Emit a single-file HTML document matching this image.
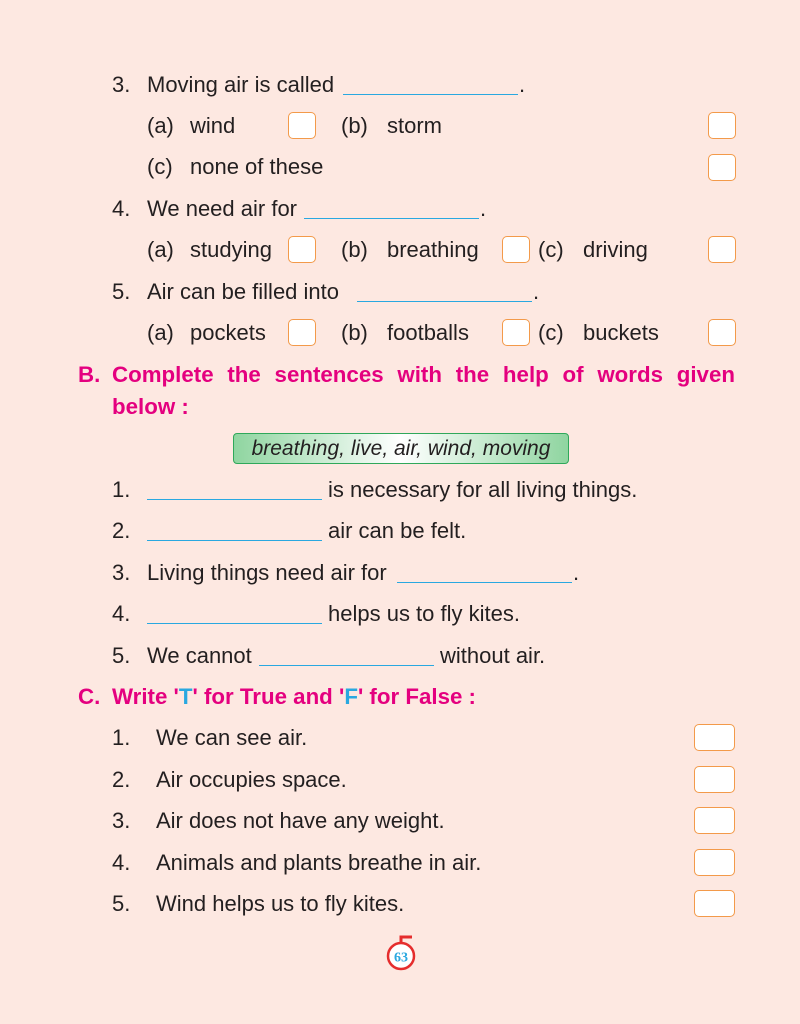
<!DOCTYPE html>
<html><head><meta charset="utf-8"><style>
body{margin:0;width:800px;height:1024px;background:#fde8e1;position:relative;overflow:hidden;font-family:"Liberation Sans",sans-serif;color:#231f20}
.t{position:absolute;font-size:22px;line-height:24px;white-space:nowrap;margin-top:1px}
.h{position:absolute;font-size:22.3px;line-height:24px;font-weight:bold;color:#e4007f;white-space:nowrap;margin-top:1px}
.ln{position:absolute;height:0;border-top:1.3px solid #29a8e0}
.b{position:absolute;width:26px;height:25px;background:#fff;border:1.3px solid #f39a4a;border-radius:5px}
.bw{position:absolute;width:39px;height:25px;background:#fff;border:1.3px solid #f39a4a;border-radius:5px}
</style></head><body>
<div class="t" style="left:112px;top:72px">3.</div><div class="t" style="left:147px;top:72px">Moving air is called</div><div class="ln" style="left:343px;top:94px;width:175px"></div><div class="t" style="left:519px;top:72px">.</div>
<div class="t" style="left:147px;top:113px">(a)</div><div class="t" style="left:190px;top:113px">wind</div><div class="b" style="left:288px;top:112px"></div><div class="t" style="left:341px;top:113px">(b)</div><div class="t" style="left:387px;top:113px">storm</div><div class="b" style="left:708px;top:112px"></div>
<div class="t" style="left:147px;top:154px">(c)</div><div class="t" style="left:190px;top:154px">none of these</div><div class="b" style="left:708px;top:154px"></div>
<div class="t" style="left:112px;top:196px">4.</div><div class="t" style="left:147px;top:196px">We need air for</div><div class="ln" style="left:304px;top:218px;width:175px"></div><div class="t" style="left:480px;top:196px">.</div>
<div class="t" style="left:147px;top:237px">(a)</div><div class="t" style="left:190px;top:237px">studying</div><div class="b" style="left:288px;top:236px"></div><div class="t" style="left:341px;top:237px">(b)</div><div class="t" style="left:387px;top:237px">breathing</div><div class="b" style="left:502px;top:236px"></div><div class="t" style="left:538px;top:237px">(c)</div><div class="t" style="left:583px;top:237px">driving</div><div class="b" style="left:708px;top:236px"></div>
<div class="t" style="left:112px;top:279px">5.</div><div class="t" style="left:147px;top:279px">Air can be filled into</div><div class="ln" style="left:357px;top:301px;width:175px"></div><div class="t" style="left:533px;top:279px">.</div>
<div class="t" style="left:147px;top:320px">(a)</div><div class="t" style="left:190px;top:320px">pockets</div><div class="b" style="left:288px;top:319px"></div><div class="t" style="left:341px;top:320px">(b)</div><div class="t" style="left:387px;top:320px">footballs</div><div class="b" style="left:502px;top:319px"></div><div class="t" style="left:538px;top:320px">(c)</div><div class="t" style="left:583px;top:320px">buckets</div><div class="b" style="left:708px;top:319px"></div>
<div class="h" style="left:78px;top:362px">B.</div><div class="h" style="left:112px;top:362px;width:623px;display:flex;justify-content:space-between"><span>Complete</span><span>the</span><span>sentences</span><span>with</span><span>the</span><span>help</span><span>of</span><span>words</span><span>given</span></div>
<div class="h" style="left:112px;top:394px">below :</div>
<div style="position:absolute;left:233px;top:433px;width:334px;height:29px;border:1.3px solid #2fa85a;border-radius:4px;background:linear-gradient(90deg,#8fd5a0,#ffffff 50%,#8fd5a0);font-style:italic;font-size:21px;line-height:29px;text-align:center">breathing, live, air, wind, moving</div>
<div class="t" style="left:112px;top:477px">1.</div><div class="ln" style="left:147px;top:499px;width:175px"></div><div class="t" style="left:328px;top:477px">is necessary for all living things.</div>
<div class="t" style="left:112px;top:518px">2.</div><div class="ln" style="left:147px;top:540px;width:175px"></div><div class="t" style="left:328px;top:518px">air can be felt.</div>
<div class="t" style="left:112px;top:560px">3.</div><div class="t" style="left:147px;top:560px">Living things need air for</div><div class="ln" style="left:397px;top:582px;width:175px"></div><div class="t" style="left:573px;top:560px">.</div>
<div class="t" style="left:112px;top:601px">4.</div><div class="ln" style="left:147px;top:623px;width:175px"></div><div class="t" style="left:328px;top:601px">helps us to fly kites.</div>
<div class="t" style="left:112px;top:643px">5.</div><div class="t" style="left:147px;top:643px">We cannot</div><div class="ln" style="left:259px;top:665px;width:175px"></div><div class="t" style="left:440px;top:643px">without air.</div>
<div class="h" style="left:78px;top:684px">C.</div><div class="h" style="left:112px;top:684px">Write '<span style="color:#29a8e0">T</span>' for True and '<span style="color:#29a8e0">F</span>' for False :</div>
<div class="t" style="left:112px;top:725px">1.</div><div class="t" style="left:156px;top:725px">We can see air.</div><div class="bw" style="left:694px;top:724px"></div>
<div class="t" style="left:112px;top:767px">2.</div><div class="t" style="left:156px;top:767px">Air occupies space.</div><div class="bw" style="left:694px;top:766px"></div>
<div class="t" style="left:112px;top:808px">3.</div><div class="t" style="left:156px;top:808px">Air does not have any weight.</div><div class="bw" style="left:694px;top:807px"></div>
<div class="t" style="left:112px;top:850px">4.</div><div class="t" style="left:156px;top:850px">Animals and plants breathe in air.</div><div class="bw" style="left:694px;top:849px"></div>
<div class="t" style="left:112px;top:891px">5.</div><div class="t" style="left:156px;top:891px">Wind helps us to fly kites.</div><div class="bw" style="left:694px;top:890px"></div>
<svg style="position:absolute;left:384px;top:932px" width="34" height="40"><path d="M17 10 V5 H28" stroke="#e52d2d" stroke-width="3" fill="none"/><circle cx="17" cy="24" r="13" fill="#fff" stroke="#e52d2d" stroke-width="2.5"/><text x="17" y="29.5" text-anchor="middle" font-family="Liberation Serif" font-weight="bold" font-size="14" fill="#29a8e0">63</text></svg>
</body></html>
